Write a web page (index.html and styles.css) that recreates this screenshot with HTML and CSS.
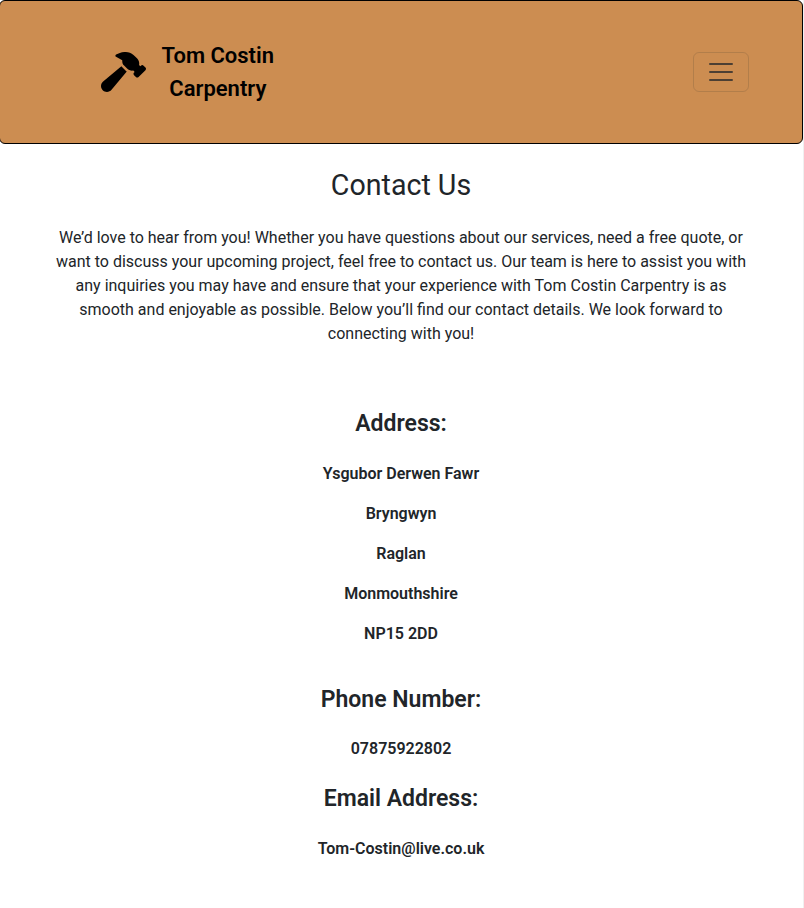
FILE: index.html
```
<!DOCTYPE html>
<html lang="en">
<head>
<meta charset="utf-8">
<title>Tom Costin Carpentry - Contact Us</title>
<link rel="stylesheet" href="styles.css">
</head>
<body>
<header class="navbar">
  <a class="brand">
    <svg class="hammer" viewBox="0 0 576 512" aria-hidden="true"><path d="M413.5 237.5c-28.2 4.8-58.2-3.6-80-25.4l-38.1-38.1C280.4 159 272 138.8 272 117.6V105.5L192.3 62c-5.3-2.9-8.6-8.6-8.3-14.7s3.9-11.5 9.5-14l47.2-21C259.1 4.2 279 0 299.2 0h18.1c36.7 0 72 14 98.7 39.1l44.6 42c24.2 22.8 33.2 55.7 26.6 86L503 183l8-8c9.4-9.4 24.6-9.4 33.9 0l24 24c9.4 9.4 9.4 24.6 0 33.9l-88 88c-9.4 9.4-24.6 9.4-33.9 0l-24-24c-9.4-9.4-9.4-24.6 0-33.9l8-8-17.5-17.5zM27.4 377.1L260.9 182.6c3.5 4.9 7.5 9.6 11.8 14l38.1 38.1c6 6 12.4 11.2 19.2 15.7L134.9 484.6c-14.5 17.4-36 27.4-58.6 27.4C34.1 512 0 477.8 0 435.7c0-22.6 10.1-44.1 27.4-58.6z"/></svg>
    <span class="brand-name">Tom Costin<br>Carpentry</span>
  </a>
  <button class="toggler" type="button">
    <svg class="toggler-icon" viewBox="0 0 30 30" aria-hidden="true"><path stroke-linecap="round" stroke-miterlimit="10" stroke-width="2" d="M4 7h22M4 15h22M4 23h22"/></svg>
  </button>
</header>
<main class="contact">
  <h1 class="title">Contact Us</h1>
  <p class="intro">We’d love to hear from you! Whether you have questions about our services, need a free quote, or want to discuss your upcoming project, feel free to contact us. Our team is here to assist you with any inquiries you may have and ensure that your experience with Tom Costin Carpentry is as smooth and enjoyable as possible. Below you’ll find our contact details. We look forward to connecting with you!</p>
  <section class="address">
    <h2 class="heading">Address:</h2>
    <p class="detail">Ysgubor Derwen Fawr</p>
    <p class="detail">Bryngwyn</p>
    <p class="detail">Raglan</p>
    <p class="detail">Monmouthshire</p>
    <p class="detail">NP15 2DD</p>
  </section>
  <section class="phone">
    <h2 class="heading">Phone Number:</h2>
    <p class="detail">07875922802</p>
  </section>
  <section class="email">
    <h2 class="heading">Email Address:</h2>
    <p class="detail">Tom-Costin@live.co.uk</p>
  </section>
</main>
</body>
</html>
```
FILE: styles.css
```
* {
  box-sizing: border-box;
}

html {
  background: #fff;
}

body {
  margin: 0;
  width: 804px;
  height: 908px;
  padding-right: 1px;
  overflow: hidden;
  background: linear-gradient(#f0f0f0, #f0f0f0) right / 1px 100% no-repeat #fff;
  color: #212529;
  font: 400 16px/24px Roboto, sans-serif;
}

.navbar {
  display: flex;
  align-items: center;
  justify-content: space-between;
  height: 144px;
  margin-left: -1px;
  padding: 0 53px 0 101px;
  border: 1px solid #000;
  border-radius: 6px;
  background: #cc8d51;
}

.brand {
  display: flex;
  align-items: center;
  gap: 15.6px;
  color: #000;
}

.hammer {
  width: 45px;
  height: 40px;
}

.brand-name {
  font-size: 22px;
  font-weight: 600;
  line-height: 33px;
  text-align: center;
}

.toggler {
  display: flex;
  align-items: center;
  justify-content: center;
  width: 56px;
  height: 40px;
  padding: 0;
  border: 1px solid rgba(33, 37, 41, 0.15);
  border-radius: 6px;
  background: none;
}

.toggler-icon {
  width: 30px;
  height: 30px;
  fill: none;
  stroke: rgba(33, 37, 41, 0.75);
}

.contact {
  margin-left: -1px;
  padding: 24px 48px 0;
  text-align: center;
}

.title {
  margin: 0 0 24px;
  font-size: 28.6px;
  font-weight: 400;
  line-height: 34px;
}

.intro {
  margin: 0 0 64px;
}

.heading {
  margin: 0 0 24px;
  font-size: 23px;
  font-weight: 600;
  line-height: 28px;
}

.detail {
  margin: 0 0 16px;
  font-weight: 600;
}

.address {
  margin-bottom: 40px;
}

.phone {
  margin-bottom: 24px;
}

.phone .heading {
  margin-bottom: 23px;
}
```
